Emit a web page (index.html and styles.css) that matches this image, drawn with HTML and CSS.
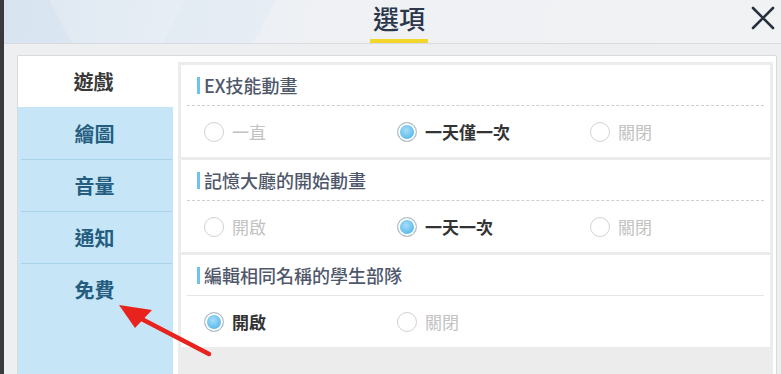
FILE: index.html
```html
<!DOCTYPE html>
<html lang="zh-Hant">
<head>
<meta charset="utf-8">
<title>選項</title>
<link rel="stylesheet" href="styles.css">
</head>
<body>
<div class="app">
  <header class="header">
    <div class="header-spacer"></div>
    <h1 class="title">選項</h1>
    <button class="close" aria-label="close">
      <svg width="24" height="24" viewBox="0 0 24 24"><path d="M2 2 L22 22 M22 2 L2 22" stroke="#26303f" stroke-width="2.6" fill="none" stroke-linecap="round"/></svg>
    </button>
  </header>
  <main class="main">
    <div class="panel">
      <nav class="sidebar">
        <div class="tab tab--active">遊戲</div>
        <div class="tabgroup">
          <div class="tab">繪圖</div>
          <div class="tab">音量</div>
          <div class="tab">通知</div>
          <div class="tab">免費</div>
        </div>
      </nav>
      <section class="content">
        <div class="group">
          <div class="group-head">EX技能動畫</div>
          <div class="options">
            <label class="opt"><span class="radio"></span><span class="opt-label">一直</span></label>
            <label class="opt opt--on"><span class="radio"></span><span class="opt-label">一天僅一次</span></label>
            <label class="opt"><span class="radio"></span><span class="opt-label">關閉</span></label>
          </div>
        </div>
        <div class="group">
          <div class="group-head">記憶大廳的開始動畫</div>
          <div class="options">
            <label class="opt"><span class="radio"></span><span class="opt-label">開啟</span></label>
            <label class="opt opt--on"><span class="radio"></span><span class="opt-label">一天一次</span></label>
            <label class="opt"><span class="radio"></span><span class="opt-label">關閉</span></label>
          </div>
        </div>
        <div class="group">
          <div class="group-head group-head--solid">編輯相同名稱的學生部隊</div>
          <div class="options">
            <label class="opt opt--on"><span class="radio"></span><span class="opt-label">開啟</span></label>
            <label class="opt"><span class="radio"></span><span class="opt-label">關閉</span></label>
          </div>
        </div>
      </section>
    </div>
  </main>
  <svg class="arrow" width="781" height="374" viewBox="0 0 781 374">
    <line x1="209" y1="354" x2="134" y2="315" stroke="#e8221c" stroke-width="4.5" stroke-linecap="round"/>
    <polygon points="119,305 152,310 135,328" fill="#e8221c"/>
  </svg>
</div>
</body>
</html>
```
FILE: styles.css
```css
* { box-sizing: border-box; }
html, body { margin: 0; padding: 0; }
body {
  width: 781px;
  height: 374px;
  overflow: hidden;
  background: #eeeff1;
  font-family: "Noto Sans CJK TC", "Noto Sans", sans-serif;
}
.app {
  position: relative;
  height: 374px;
  border-left: 4px solid #3a3a3a;
  display: flex;
  flex-direction: column;
  overflow: hidden;
}
.header {
  height: 44px;
  flex: none;
  display: grid;
  grid-template-columns: 1fr auto 1fr;
  align-items: end;
  padding: 0 6px 0 19px;
  border-bottom: 1px solid #dadbde;
  background:
    linear-gradient(62deg, rgba(205,222,238,0.35) 0 60px, transparent 60px),
    linear-gradient(118deg, transparent 0 160px, rgba(220,231,242,0.35) 160px 240px, transparent 240px),
    linear-gradient(100deg, #dde7f1 0, #e6edf4 20%, #eff1f4 40%, #f1f2f4 100%);
}
.title {
  margin: 0;
  font-size: 26px;
  font-weight: 500;
  line-height: 32px;
  color: #2b374a;
  padding: 0 3px 5px;
  border-bottom: 4px solid #f2d62c;
}
.close {
  justify-self: end;
  align-self: start;
  margin-top: 6px;
  padding: 0;
  border: 0;
  background: transparent;
  width: 24px;
  height: 24px;
  display: block;
}
.close svg { display: block; }
.main {
  flex: 1;
  padding: 11px 4px 0 13px;
  min-height: 0;
}
.panel {
  height: 100%;
  background: #fff;
  border: 1px solid #dadada;
  border-bottom: 0;
  border-radius: 2px 2px 0 0;
  display: flex;
  gap: 5px;
  padding-right: 3px;
}
.sidebar {
  width: 155px;
  flex: none;
  display: flex;
  flex-direction: column;
}
.tab {
  height: 52px;
  display: flex;
  align-items: center;
  justify-content: center;
  padding-right: 4px;
  font-size: 20px;
  font-weight: 700;
  color: #245d7f;
  border-top: 1px solid #a9d1e7;
}
.tabgroup .tab:first-child { border-top: 0; }
.tab--active {
  height: 51px;
  border-top: 0;
  color: #383838;
  background: #fff;
}
.tabgroup {
  flex: 1;
  background: #c6e6f8;
  padding: 0 1px 0 3px;
}
.content {
  flex: 1;
  min-width: 0;
  margin-top: 6px;
  background: #ececec;
  padding: 3px 3px 0;
  display: flex;
  flex-direction: column;
  gap: 3px;
}
.group {
  height: 92px;
  background: #fff;
  display: flex;
  flex-direction: column;
}
.group-head {
  height: 41px;
  margin: 0 6px;
  padding-left: 10px;
  display: flex;
  align-items: center;
  font-size: 18px;
  font-weight: 500;
  color: #4f586b;
  border-bottom: 1px dashed #cfcfd2;
}
.group-head::before {
  content: "";
  width: 3px;
  height: 17px;
  background: #6cc3ee;
  margin-right: 4px;
}
.group-head--solid { border-bottom: 1px solid #e6e6e8; }
.options {
  flex: 1;
  margin: 0 6px;
  padding-left: 17px;
  display: grid;
  grid-template-columns: 193px 193px 1fr;
  align-items: center;
}
.opt {
  display: flex;
  align-items: center;
  gap: 8px;
}
.radio {
  width: 20px;
  height: 20px;
  border-radius: 50%;
  border: 1px solid #d2d2d2;
  background: #fff;
  flex: none;
}
.opt-label {
  font-size: 17px;
  color: #c2c2c2;
}
.opt--on .radio {
  border-color: #b9b9b9;
  background: radial-gradient(circle at 45% 40%, #a6defa 0, #62bdec 55%, #4aa9de 100%);
  box-shadow: inset 0 0 0 2px #fff;
}
.opt--on .opt-label {
  color: #333;
  font-weight: 700;
}
.arrow {
  position: absolute;
  left: -4px;
  top: 0;
  pointer-events: none;
}
```
